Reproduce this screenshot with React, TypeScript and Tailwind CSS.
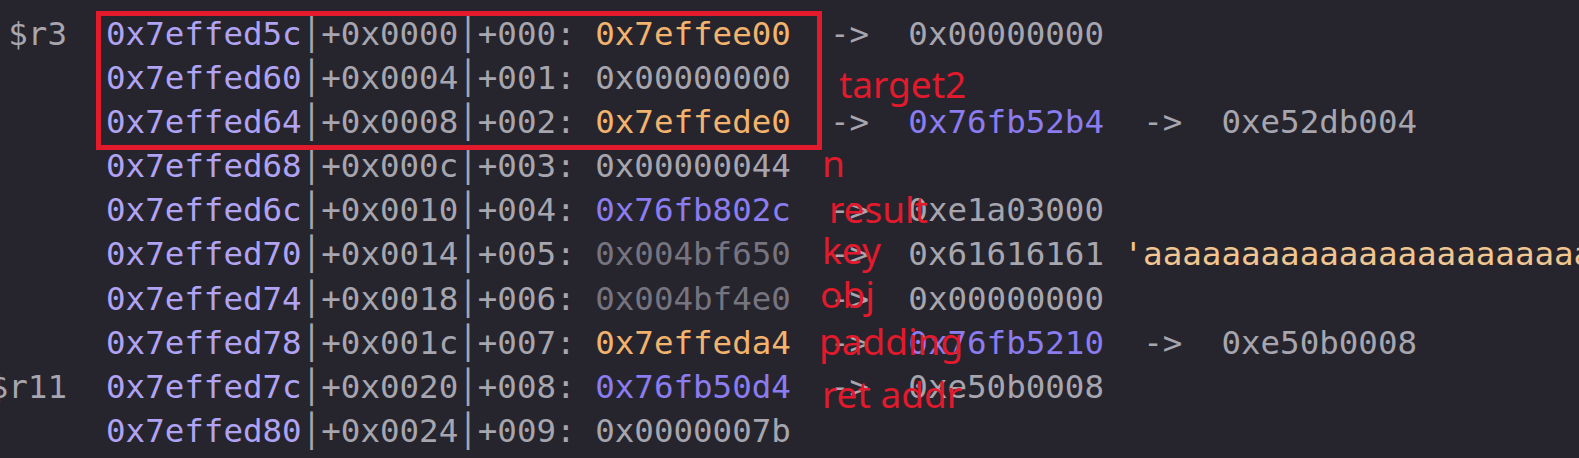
type Tone = 'gray' | 'orange' | 'purple' | 'dim' | 'peach'

const toneClass: Record<Tone, string> = {
	gray: 'text-[#a7a6af]',
	orange: 'text-[#f2b36d]',
	purple: 'text-[#8b7cf0]',
	dim: 'text-[#76747f]',
	peach: 'text-[#f1c690]',
}

interface StackRow {
	label?: string
	addr: string
	off: string
	idx: string
	chain: [Tone, string][]
}

const rows: StackRow[] = [
	{ label: '$r3', addr: '0x7effed5c', off: '+0x0000', idx: '+000:', chain: [['orange', '0x7effee00'], ['gray', '0x00000000']] },
	{ addr: '0x7effed60', off: '+0x0004', idx: '+001:', chain: [['gray', '0x00000000']] },
	{ addr: '0x7effed64', off: '+0x0008', idx: '+002:', chain: [['orange', '0x7effede0'], ['purple', '0x76fb52b4'], ['gray', '0xe52db004']] },
	{ addr: '0x7effed68', off: '+0x000c', idx: '+003:', chain: [['gray', '0x00000044']] },
	{ addr: '0x7effed6c', off: '+0x0010', idx: '+004:', chain: [['purple', '0x76fb802c'], ['gray', '0xe1a03000']] },
	{ addr: '0x7effed70', off: '+0x0014', idx: '+005:', chain: [['dim', '0x004bf650'], ['gray', '0x61616161']] },
	{ addr: '0x7effed74', off: '+0x0018', idx: '+006:', chain: [['dim', '0x004bf4e0'], ['gray', '0x00000000']] },
	{ addr: '0x7effed78', off: '+0x001c', idx: '+007:', chain: [['orange', '0x7effeda4'], ['purple', '0x76fb5210'], ['gray', '0xe50b0008']] },
	{ label: '$r11', addr: '0x7effed7c', off: '+0x0020', idx: '+008:', chain: [['purple', '0x76fb50d4'], ['gray', '0xe50b0008']] },
	{ addr: '0x7effed80', off: '+0x0024', idx: '+009:', chain: [['gray', '0x0000007b']] },
]

// red hand-written notes laid over the dump
const notes = [
	{ text: 'target2', cls: 'left-[839px] top-[65px]' },
	{ text: 'n', cls: 'left-[822px] top-[144px]' },
	{ text: 'result', cls: 'left-[829px] top-[190px]' },
	{ text: 'key', cls: 'left-[822px] top-[231px]' },
	{ text: 'obj', cls: 'left-[820px] top-[275px]' },
	{ text: 'padding', cls: 'left-[819px] top-[322px]' },
	{ text: 'ret addr', cls: 'left-[822px] top-[375px]' },
]

function Row({ row }: { row: StackRow }) {
	return (
		<div className="flex h-[44.1px] leading-[44.1px] whitespace-pre">
			<div className="flex justify-end w-[67px] shrink-0 text-[#a7a6af]">
				<span>{row.label ?? ''}</span>
			</div>
			<div className="ml-[39px] flex">
				<span className="text-[#b0a3f3]">{row.addr}</span>
				<span className="text-[#a7a6af]">│{row.off}│{row.idx} </span>
				{row.chain.map(([tone, value], i) => (
					<span key={i} className="flex">
						{i > 0 && <span className="text-[#a7a6af]">  {'->'}  </span>}
						<span className={toneClass[tone]}>{value}</span>
					</span>
				))}
				{row.addr === '0x7effed70' && (
					<span className={toneClass.peach}> 'aaaaaaaaaaaaaaaaaaaaaaaaaaaaaaaa</span>
				)}
			</div>
		</div>
	)
}

export default function App() {
	return (
		<div className="relative w-[1579px] h-[458px] overflow-hidden bg-[#26252e] font-['DejaVu_Sans_Mono',monospace] text-[32.5px]">
			<div className="flex flex-col pt-[12px]">
				{rows.map((row) => (
					<Row key={row.addr} row={row} />
				))}
			</div>

			<div className="absolute left-[96px] top-[11px] w-[726px] h-[139px] border-[5px] border-[#e3192c]" />

			{notes.map((note) => (
				<span
					key={note.text}
					className={`absolute ${note.cls} whitespace-pre font-['Noto_Sans',sans-serif] text-[37px] leading-[37px] text-[#e3192c]`}
				>
					{note.text}
				</span>
			))}
		</div>
	)
}
